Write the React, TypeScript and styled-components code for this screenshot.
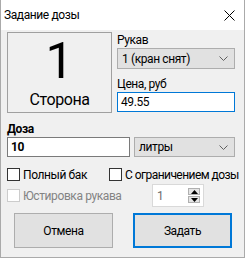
import styled, { createGlobalStyle } from 'styled-components';

const GlobalStyle = createGlobalStyle`
  html, body {
    margin: 0;
    padding: 0;
    background: #ffffff;
  }
  * {
    box-sizing: border-box;
  }
`;

const Chevron = () => (
  <svg width="9" height="5" viewBox="0 0 9 5">
    <path d="M0.5 0.5 L4.5 4.5 L8.5 0.5" fill="none" stroke="#606060" strokeWidth="1" />
  </svg>
);

const CloseIcon = () => (
  <svg width="11" height="11" viewBox="0 0 11 11">
    <path d="M0.5 0.5 L10.5 10.5 M10.5 0.5 L0.5 10.5" stroke="#000" strokeWidth="1" />
  </svg>
);

const App = () => {
  return (
    <>
      <GlobalStyle />
      <Window>
        <TitleBar>
          <Title>Задание дозы</Title>
          <CloseButton>
            <CloseIcon />
          </CloseButton>
        </TitleBar>
        <Body>
          <TopRow>
            <SideBox>
              <BigNumber>1</BigNumber>
              <SideName>Сторона</SideName>
            </SideBox>
            <Column>
              <Label>Рукав</Label>
              <Select>
                <span>1 (кран снят)</span>
                <Chevron />
              </Select>
              <Label $top={7}>Цена, руб</Label>
              <TextInput $focused>49.55</TextInput>
            </Column>
          </TopRow>

          <Label $bold $top={8}>Доза</Label>
          <DoseRow>
            <TextInput $bold>10</TextInput>
            <Select>
              <span>литры</span>
              <Chevron />
            </Select>
          </DoseRow>

          <OptionsRow>
            <Check>
              <Box />
              <span>Полный бак</span>
            </Check>
            <Check>
              <Box />
              <TightText>С ограничением дозы</TightText>
            </Check>
          </OptionsRow>

          <AdjustRow>
            <Check $disabled>
              <Box $disabled />
              <span>Юстировка рукава</span>
            </Check>
            <Spinner>
              <span>1</span>
              <SpinArrows>
                <SpinButton>
                  <svg width="7" height="4" viewBox="0 0 7 4">
                    <path d="M0 4 L3.5 0 L7 4 Z" fill="#000" />
                  </svg>
                </SpinButton>
                <SpinButton>
                  <svg width="7" height="4" viewBox="0 0 7 4">
                    <path d="M0 0 L3.5 4 L7 0 Z" fill="#000" />
                  </svg>
                </SpinButton>
              </SpinArrows>
            </Spinner>
          </AdjustRow>

          <ButtonRow>
            <Button>Отмена</Button>
            <Button $primary>Задать</Button>
          </ButtonRow>
        </Body>
      </Window>
    </>
  );
};

const Window = styled.div`
  width: 245px;
  height: 258px;
  display: flex;
  flex-direction: column;
  border: 1px solid #aaaaaa;
  border-top: none;
  background: #f0f0f0;
  font-family: Roboto, 'Liberation Sans', Arial, sans-serif;
  font-size: 12px;
  letter-spacing: -0.4px;
  color: #000;
`;

const TitleBar = styled.div`
  height: 30px;
  flex: 0 0 30px;
  display: flex;
  align-items: center;
  justify-content: space-between;
  background: #ffffff;
  padding: 0 9px 0 3px;
`;

const Title = styled.span`
  font-size: 12px;
`;

const CloseButton = styled.div`
  display: flex;
  align-items: center;
`;

const Body = styled.div`
  flex: 1;
  display: flex;
  flex-direction: column;
  padding: 2px 9px 0 6px;
`;

const TopRow = styled.div`
  display: flex;
  gap: 5px;
`;

const SideBox = styled.div`
  width: 105px;
  height: 81px;
  border: 1px solid #a0a0a0;
  display: flex;
  flex-direction: column;
  align-items: center;
  justify-content: flex-end;
  padding-bottom: 2px;
`;

const BigNumber = styled.div`
  font-size: 50px;
  font-weight: 400;
  line-height: 48px;
  letter-spacing: 0;
`;

const SideName = styled.div`
  font-size: 16px;
  line-height: 20px;
  margin-top: 5px;
`;

const Column = styled.div`
  flex: 1;
  display: flex;
  flex-direction: column;
`;

const Label = styled.div<{ $bold?: boolean; $top?: number }>`
  line-height: 16px;
  font-weight: ${(p) => (p.$bold ? 700 : 400)};
  margin-top: ${(p) => p.$top ?? 0}px;
`;

const Select = styled.div`
  height: 21px;
  display: flex;
  align-items: center;
  justify-content: space-between;
  padding: 0 6px 0 4px;
  background: #e1e1e1;
  border: 1px solid #adadad;
`;

const TextInput = styled.div<{ $focused?: boolean; $bold?: boolean }>`
  height: 20px;
  display: flex;
  align-items: center;
  padding: 0 3px;
  background: #ffffff;
  border: 1px solid ${(p) => (p.$focused ? '#0078d7' : '#7a7a7a')};
  font-weight: ${(p) => (p.$bold ? 700 : 400)};
`;

const DoseRow = styled.div`
  display: grid;
  grid-template-columns: 123px 101px;
  gap: 4px;

  & > div {
    height: 20px;
  }
`;

const OptionsRow = styled.div`
  display: grid;
  grid-template-columns: 102px auto;
  margin-top: 11px;
`;

const Check = styled.label<{ $disabled?: boolean }>`
  display: flex;
  align-items: center;
  gap: 3px;
  height: 13px;
  white-space: nowrap;
  color: ${(p) => (p.$disabled ? '#838383' : '#000')};
`;

const TightText = styled.span`
  letter-spacing: -0.55px;
`;

const Box = styled.span<{ $disabled?: boolean }>`
  width: 13px;
  height: 13px;
  flex: 0 0 13px;
  background: #ffffff;
  border: 1px solid ${(p) => (p.$disabled ? '#cccccc' : '#333333')};
`;

const AdjustRow = styled.div`
  display: flex;
  align-items: center;
  justify-content: space-between;
  margin-top: 3px;
  padding-right: 31px;
  height: 23px;
`;

const Spinner = styled.div`
  width: 52px;
  height: 23px;
  display: flex;
  align-items: center;
  justify-content: space-between;
  padding: 0 3px 0 4px;
  background: #ffffff;
  border: 1px solid #d9d9d9;
  color: #6d6d6d;
`;

const SpinArrows = styled.div`
  display: flex;
  flex-direction: column;
  gap: 1px;
`;

const SpinButton = styled.div`
  width: 12px;
  height: 7px;
  display: flex;
  align-items: center;
  justify-content: center;
  background: #e5e5e5;
  border: 1px solid #b0b0b0;
`;

const ButtonRow = styled.div`
  display: flex;
  gap: 20px;
  margin-top: 6px;
  margin-left: 7px;
`;

const Button = styled.div<{ $primary?: boolean }>`
  width: 99px;
  height: 35px;
  display: flex;
  align-items: center;
  justify-content: center;
  background: #e1e1e1;
  border: ${(p) => (p.$primary ? '2px solid #0078d7' : '1px solid #adadad')};
`;

export default App;
